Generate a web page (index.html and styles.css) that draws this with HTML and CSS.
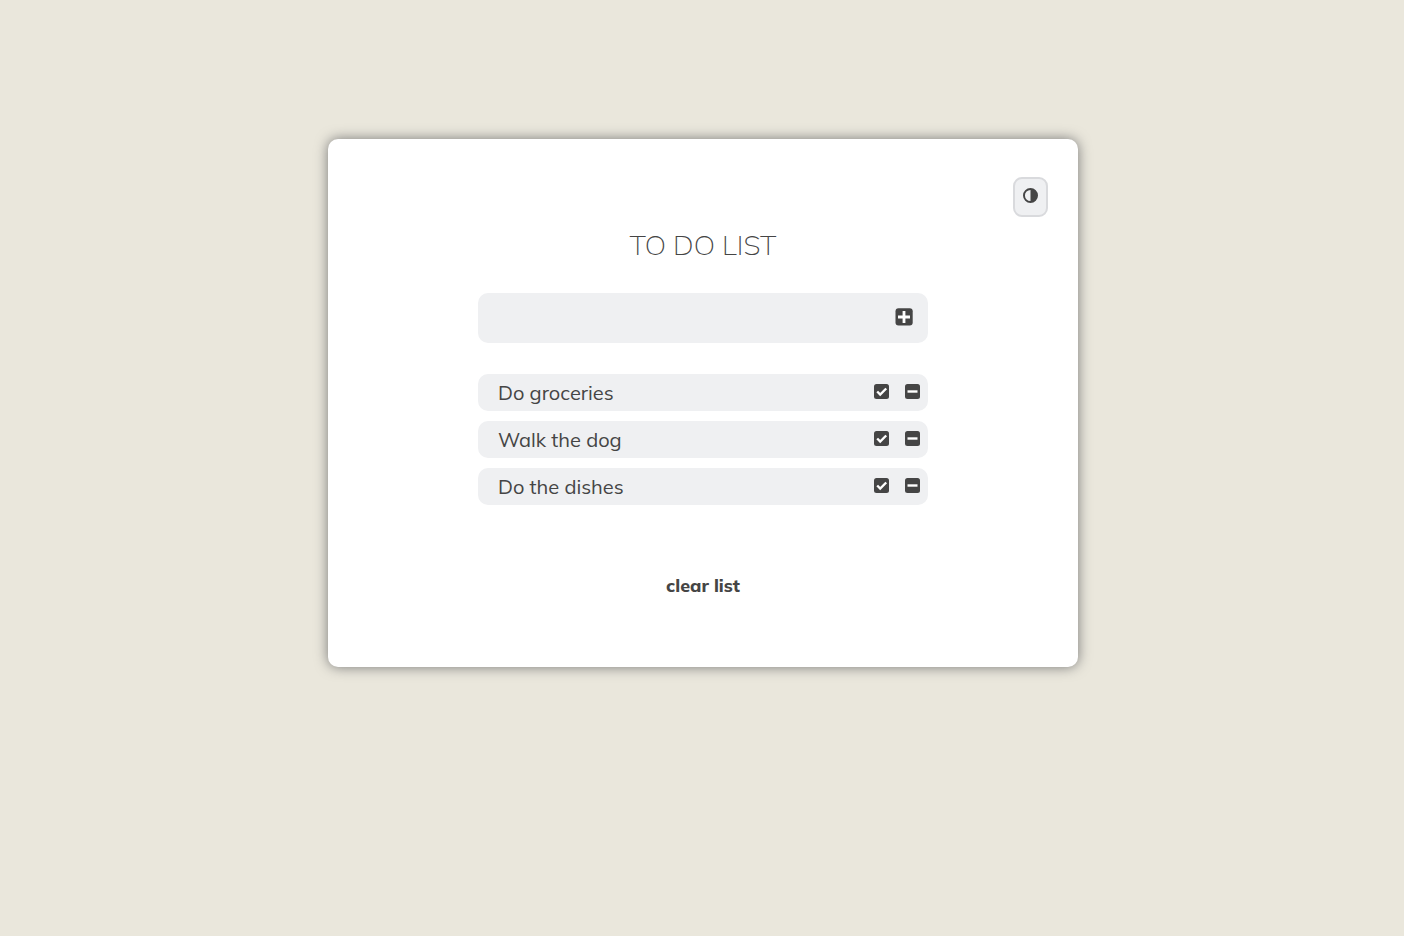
FILE: index.html
```html
<!DOCTYPE html>
<html lang="en">
<head>
<meta charset="utf-8">
<meta name="viewport" content="width=device-width, initial-scale=1">
<title>To do list</title>
<link rel="stylesheet" href="styles.css">
</head>
<body>
<svg class="sprite" aria-hidden="true">
  <symbol id="plus" viewBox="0 0 18 18"><rect class="tile" x=".5" y=".3" width="17.200" height="17.200" rx="3"/><path class="mark bold" d="M9 3v12M3 9h12"/></symbol>
  <symbol id="check" viewBox="0 0 15 15"><rect class="tile" width="15" height="15" rx="2.500"/><path class="mark" d="M3.200 7.500l3 3 6-6"/></symbol>
  <symbol id="minus" viewBox="0 0 15 15"><rect class="tile" width="15" height="15" rx="2.500"/><path class="mark" d="M2.500 7.500h10"/></symbol>
</svg>
<main class="card">
  <button class="theme" type="button" aria-label="Toggle theme">
    <svg class="icon" viewBox="0 0 496 496" aria-hidden="true"><path fill-rule="evenodd" d="M0 248a248 248 0 1 0 496 0a248 248 0 1 0-496 0zM248 432V64a184 184 0 0 0 0 368z"/></svg>
  </button>
  <h1 class="title">TO DO LIST</h1>
  <form class="entry">
    <input class="entry-text" type="text" aria-label="New task">
    <button class="action add" type="button" aria-label="Add task"><svg class="icon large"><use href="#plus"/></svg></button>
  </form>
  <ul class="tasks">
    <li class="task"><span class="task-name">Do groceries</span>
      <button class="action" type="button" aria-label="Complete Do groceries"><svg class="icon"><use href="#check"/></svg></button>
      <button class="action" type="button" aria-label="Remove Do groceries"><svg class="icon"><use href="#minus"/></svg></button></li>
    <li class="task"><span class="task-name">Walk the dog</span>
      <button class="action" type="button" aria-label="Complete Walk the dog"><svg class="icon"><use href="#check"/></svg></button>
      <button class="action" type="button" aria-label="Remove Walk the dog"><svg class="icon"><use href="#minus"/></svg></button></li>
    <li class="task"><span class="task-name">Do the dishes</span>
      <button class="action" type="button" aria-label="Complete Do the dishes"><svg class="icon"><use href="#check"/></svg></button>
      <button class="action" type="button" aria-label="Remove Do the dishes"><svg class="icon"><use href="#minus"/></svg></button></li>
  </ul>
  <button class="clear" type="button">clear list</button>
</main>
</body>
</html>
```
FILE: styles.css
```css
* { box-sizing: border-box; }
body {
  margin: 0;
  padding: 139px 20px 40px 22px;
  background: #eae7dc;
  color: #454545;
  font-family: Muli, Mulish, Lato, sans-serif;
}
button {
  padding: 0;
  border: 0;
  background: none;
  color: inherit;
  font: inherit;
  cursor: pointer;
}
.sprite { display: none; }
.icon { display: block; width: 15px; height: 15px; fill: #454545; }
.large { width: 18px; height: 18px; }
.mark { fill: none; stroke: #fff; stroke-width: 2.4; }
.bold { stroke-width: 2.8; }
.card {
  display: flex;
  flex-direction: column;
  align-items: center;
  max-width: 750px;
  margin: 0 auto;
  padding: 38px 30px 67px;
  border-radius: 10px;
  background: #fff;
  box-shadow: 0 0 13px #777;
}
.theme {
  display: grid;
  justify-content: center;
  align-self: flex-end;
  width: 35px;
  height: 40px;
  padding-top: 9px;
  border: 2px solid #d9dadd;
  border-radius: 9px;
  background: #eff0f2;
}
.title {
  margin: 10px 0 31px;
  font-size: 28px;
  line-height: 35px;
  font-weight: 200;
}
.entry, .tasks { width: 100%; max-width: 450px; }
.entry {
  display: flex;
  align-items: center;
  height: 50px;
  padding: 0 15px 2px 20px;
  border-radius: 10px;
  background: #eff0f2;
}
.entry-text {
  flex: 1;
  min-width: 0;
  border: 0;
  outline: 0;
  background: none;
  color: inherit;
  font: inherit;
  font-size: 20px;
}
.tasks {
  display: grid;
  gap: 10px;
  margin: 31px 0 67px;
  padding: 0;
  list-style: none;
}
.task {
  display: flex;
  align-items: center;
  gap: 16px;
  padding: 0 8px 0 20px;
  border-radius: 10px;
  background: #eff0f2;
}
.task .action { padding-bottom: 3px; }
.task-name { flex: 1; font-size: 20px; line-height: 37px; }
.clear { font-size: 18px; line-height: 28px; font-weight: 800; }
```
